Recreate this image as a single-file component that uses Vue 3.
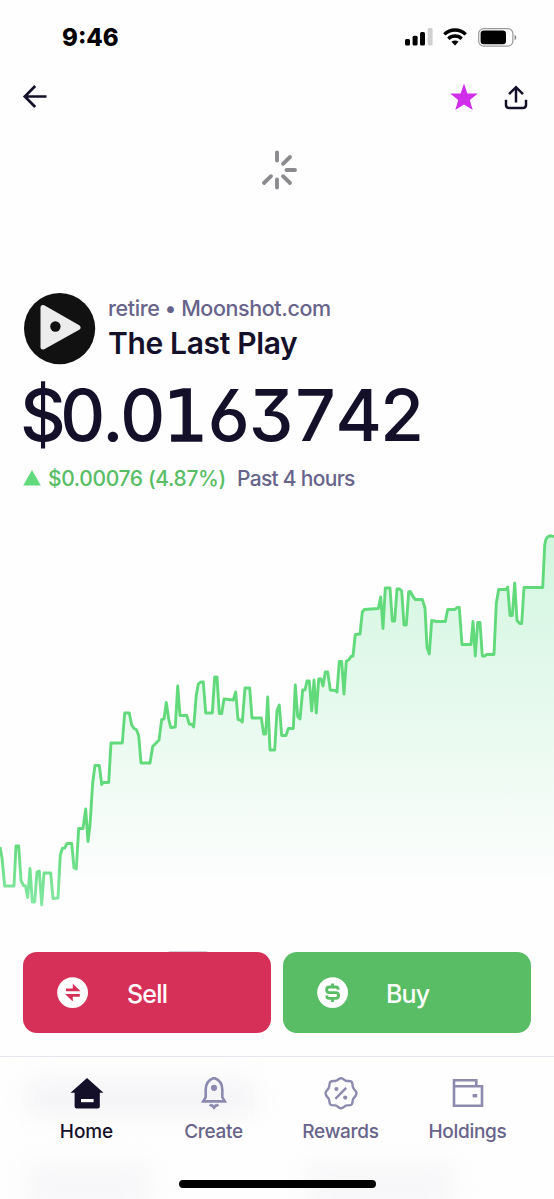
<template>

<div class="screen">

    <!-- Status bar -->

    <div class="status-bar">

        <span class="clock">{{ clock }}</span>

        <div class="status-icons">

            <svg width="28" height="18" viewBox="0 0 28 18">
                <rect x="0" y="11" width="5" height="6.5" rx="1.5" />
                <rect x="7.6" y="7.8" width="5" height="9.7" rx="1.5" />
                <rect x="15" y="4" width="5" height="13.5" rx="1.5" />
                <rect x="22.6" y="0" width="5" height="17.5" rx="1.5" fill="#d0d0d0" />
            </svg>

            <svg class="wifi" width="24" height="18" viewBox="0 0 24 18" fill="none" stroke="#000" stroke-width="3.3">
                <path d="M1.3 6.4C7.2 .5 16.8 .5 22.7 6.4" />
                <path d="M5.3 10.7C9 7.1 15 7.1 18.7 10.7" />
                <path d="M8.4 13.8C10.5 12 13.5 12 15.6 13.8L12 17.4Z" fill="#000" stroke="none" />
            </svg>

            <svg class="battery" width="39" height="19" viewBox="0 0 39 19">
                <rect x=".7" y=".7" width="34.2" height="17.4" rx="5" fill="none" stroke="#999" stroke-width="1.2" />
                <rect x="2.6" y="2.6" width="25.4" height="13.6" rx="3.2" />
                <path d="M36.6 6.8C38.9 7.8 38.9 11.2 36.6 12.2Z" fill="#888" />
            </svg>

        </div>

    </div>

    <!-- Top actions -->

    <div class="top-bar">

        <svg width="26" height="26" viewBox="0 0 26 26" fill="none" stroke="#15102a" stroke-width="2.7">
            <path d="M24.5 12.5H3M13.2 2L2.8 12.5L13.2 23" />
        </svg>

        <div class="top-actions">

            <svg width="28" height="28" viewBox="0 0 28 28" fill="#cf2eeb">
                <path d="M14 .6L17.4 10.5L27.9 10.6L19.8 17L22.7 27L14 21.4L5.3 27L8.2 17L.1 10.6L10.6 10.5Z" />
            </svg>

            <svg width="24" height="26" viewBox="0 0 24 26" fill="none" stroke="#15102a" stroke-width="2.5">
                <path d="M12 18.5V4M5 10.2L12 3.2L19 10.2M2 15.8V21Q2 23.9 4.9 23.9H19.1Q22 23.9 22 21V15.8" />
            </svg>

        </div>

    </div>

    <!-- Refresh spinner -->

    <div class="spinner">

        <svg width="44" height="42" viewBox="-22 -21 44 42" stroke="#8b8b8f" stroke-width="3.9" stroke-linecap="round">
            <path d="M0 -17.5V-9.5M0 9.5V17.5M9.5 0H18M6 -6.2L13 -13M6 6.2L13 13M-6 6.2L-13 13" />
        </svg>

    </div>

    <!-- Token -->

    <div class="token">

        <svg class="token-logo" width="72" height="72" viewBox="0 0 72 72">
            <circle cx="35.6" cy="35.6" r="35.6" fill="#111" />
            <path d="M19 14.5V54L54 34.5Z" fill="#ececec" stroke="#ececec" stroke-width="5" stroke-linejoin="round" />
            <circle cx="31.4" cy="33.5" r="5.2" fill="#111" />
        </svg>

        <div class="token-text">
            <span class="token-symbol">retire • Moonshot.com</span>
            <span class="token-name">The Last Play</span>
        </div>

    </div>

    <div class="price"><span class="currency">$</span>0.0<span class="slab">1</span>63742</div>

    <div class="change">

        <svg width="18" height="16" viewBox="0 0 18 16" fill="#62d97b">
            <path d="M9 0L17.8 15.5H.2Z" />
        </svg>

        <span class="change-value">$0.00076 (4.87%)</span>
        <span class="change-period">Past 4 hours</span>

    </div>

    <!-- Chart -->

    <svg class="chart" width="554" height="452" viewBox="0 500 554 452">
        <defs>
            <linearGradient id="area" gradientUnits="userSpaceOnUse" x1="0" y1="536" x2="0" y2="890">
                <stop offset="0" stop-color="#d2f6df" />
                <stop offset=".45" stop-color="#e5f9ed" />
                <stop offset="1" stop-color="#fefefe" />
            </linearGradient>
            <linearGradient id="line" gradientUnits="userSpaceOnUse" x1="0" y1="840" x2="0" y2="910">
                <stop offset="0" stop-color="#62da7b" />
                <stop offset="1" stop-color="#87e9a6" />
            </linearGradient>
        </defs>
        <path :d="areaPath" fill="url(#area)" />
        <path :d="linePath" fill="none" stroke="url(#line)" stroke-width="2.9" stroke-linejoin="round" />
    </svg>

    <!-- Trade buttons -->

    <div class="trade">

        <span class="sheet-handle"></span>

        <button class="btn btn-sell">
            <svg width="32" height="32" viewBox="0 0 32 32">
                <circle cx="15.6" cy="15.6" r="15.4" fill="#fff" />
                <path d="M9 11.6H15.8V6.8L23.6 14.3H9ZM22.8 19.8H15.8V24.6L8 17.1H22.8Z" fill="#d73058" />
            </svg>
            <span>Sell</span>
        </button>

        <button class="btn btn-buy">
            <svg width="32" height="32" viewBox="0 0 32 32">
                <circle cx="15.6" cy="15.6" r="15.4" fill="#fff" />
                <path d="M21.2 12.8V12.4Q21.2 10 18.8 10H12.4Q9.6 10 9.6 12.8Q9.6 15.6 12.4 15.6H18.8Q21.6 15.6 21.6 18.5Q21.6 21.3 18.8 21.3H12.2Q9.8 21.3 9.8 18.9V18.5M15.6 6.4V10M15.6 21.3V24.9" fill="none" stroke="#58bd64" stroke-width="2.8" />
            </svg>
            <span>Buy</span>
        </button>

    </div>

    <!-- Tab bar -->

    <nav class="tab-bar">

        <span class="haze haze-top"></span>
        <span class="haze haze-left"></span>
        <span class="haze haze-right"></span>

        <div class="tabs">

            <div class="tab active">
                <svg width="34" height="34" viewBox="0 0 34 34">
                    <path d="M17 1L33.5 15.7H29.8V29.5Q29.8 31.5 27.8 31.5H6.6Q4.6 31.5 4.6 29.5V15.7H.5Z" fill="#15102a" />
                    <rect x="11" y="22" width="12.6" height="3.2" fill="#fff" />
                </svg>
                <span>Home</span>
            </div>

            <div class="tab">
                <svg width="34" height="34" viewBox="0 0 34 34" fill="none" stroke="#8c8aae" stroke-width="2.6">
                    <path d="M8.7 20.2V12.5C8.7 6.5 12 2.6 17 .9C22 2.6 25.3 6.5 25.3 12.5V20.2L27.8 24.4H6.2Z" />
                    <circle cx="17" cy="10.8" r="3.1" fill="#8c8aae" stroke="none" />
                    <path d="M12.8 27.4Q14 29 15.2 28.6L17 30.7L18.8 28.6Q20 29 21.2 27.4" />
                </svg>
                <span>Create</span>
            </div>

            <div class="tab">
                <svg width="34" height="34" viewBox="0 0 34 34" fill="none" stroke="#8c8aae" stroke-width="2.4">
                    <path d="M17 1.2C20 1.2 20 4 22.8 4C25.2 4 28.5 3.2 28.5 7.5C28.5 10.2 28.8 11 30.4 12.6C33.2 15.2 33.2 17.5 30.5 20.2C28.9 21.8 28.5 22.5 28.5 25C28.5 28.9 25.4 28.3 22.8 28.4C20 28.5 20 31.3 17 31.3C14 31.3 14 28.5 11.2 28.4C8.6 28.3 5.5 28.9 5.5 25C5.5 22.5 5.1 21.8 3.5 20.2C.8 17.5 .8 15.2 3.6 12.6C5.2 11 5.5 10.2 5.5 7.5C5.5 3.2 8.8 4 11.2 4C14 4 14 1.2 17 1.2Z" stroke-linejoin="round" />
                    <path d="M11.3 21.8L22.2 10.8" />
                    <circle cx="12.4" cy="12" r="2.1" fill="#8c8aae" stroke="none" />
                    <circle cx="21.2" cy="20.6" r="2.1" fill="#8c8aae" stroke="none" />
                </svg>
                <span>Rewards</span>
            </div>

            <div class="tab">
                <svg width="34" height="34" viewBox="0 0 34 34" fill="none" stroke="#8c8aae" stroke-width="2.6">
                    <path d="M3 3.3H25.3V9.3M3 2V28.7H31V9.3H3" />
                    <rect x="21.6" y="17" width="4.6" height="3.4" fill="#8c8aae" stroke="none" />
                </svg>
                <span>Holdings</span>
            </div>

        </div>

        <span class="home-indicator"></span>

    </nav>

</div>

</template>

<script setup>

import { computed, ref } from 'vue'

const clock = ref('9:46')

/**
 * Price history
 */

const points = [
    [0, 847], [2, 858], [4.7, 886], [14, 886], [16, 846], [18.7, 846], [21, 880.5], [23.5, 885.5],
    [25.5, 886], [27.7, 897.5], [30, 868.5], [32.3, 902], [34.7, 902], [37, 872], [39.3, 871],
    [41.7, 905], [44, 873], [50.7, 873], [53, 898.5], [58, 898], [60.3, 855], [62.3, 848.5],
    [64.7, 848], [67, 843.5], [71.7, 843.5], [74, 868], [76.3, 869], [78.7, 828.5], [83, 828.5],
    [85.7, 809], [88, 841.5], [90, 825], [92.7, 783], [95, 765.5], [99.3, 765.5], [101.7, 784.5],
    [102.7, 782.5], [108.7, 782.5], [111, 743], [122.3, 743], [124.7, 713], [129.3, 713],
    [131.7, 725], [134, 728.5], [136.3, 729.5], [138.7, 735.5], [141, 763], [150, 763],
    [152.7, 746.5], [159, 740], [161.7, 719.5], [164, 719], [166.3, 702.5], [168.7, 719],
    [170.7, 727.5], [175.3, 727], [177.7, 686], [180, 715.5], [186.7, 715.5], [189.3, 724],
    [192, 724.5], [193.7, 727], [196.3, 695], [198.3, 684], [200.7, 682], [203.3, 682],
    [205.7, 713], [212.3, 713], [214.7, 677], [217, 677], [219.3, 713.5], [221.7, 713.5],
    [224, 699], [233.3, 700], [235.7, 692], [238, 719.5], [240.3, 720], [242.3, 722],
    [245, 688], [249.7, 688], [252, 718], [261.3, 718], [263.7, 734], [265.7, 734],
    [267.7, 697], [270, 750], [274.7, 750], [277, 710.5], [279.3, 705], [281.7, 735.5],
    [286, 735.5], [288.3, 728.5], [293.3, 728.5], [295.3, 685], [297.7, 716.5], [300, 719],
    [302.7, 690], [305, 690], [307, 681], [309.3, 681], [311.7, 711], [314, 680],
    [316.3, 713], [318.7, 679], [321, 679], [323, 686], [325.3, 672], [327.7, 672],
    [330.3, 690], [335.5, 690.5], [337, 692], [339.3, 661.5], [341.7, 661.5], [344, 694],
    [346.3, 661], [348.7, 660], [351, 656.5], [353, 656], [355.3, 634.5], [360, 634],
    [362.3, 612], [364.3, 609.5], [378.3, 608.5], [380.7, 597], [383, 628.5], [385.3, 588],
    [390, 588], [392.3, 621], [394.7, 621], [397, 589], [399.5, 589], [401.7, 591],
    [404, 625], [406.3, 625], [408.7, 592], [410.3, 591.5], [413, 596.5], [415.3, 599.5],
    [422.3, 599.5], [425, 608], [427, 647.5], [429.3, 654], [431.7, 620.5], [436.7, 621.5],
    [445.3, 621.5], [447.7, 609.5], [455, 609.5], [457, 607.5], [459.3, 607.5], [462, 644.5],
    [471, 644.5], [473, 621.5], [475.3, 656], [477.7, 622.5], [480, 622.5], [482.3, 656],
    [484.7, 656], [486.7, 654.5], [494, 654.5], [496.3, 603], [498.7, 589.5], [506, 589.5],
    [507.7, 587], [510, 615.5], [512.3, 615.5], [514.7, 583], [517, 620.5], [519.7, 623.5],
    [521.7, 623.5], [524, 587.5], [542.7, 587.5], [544.7, 545], [545.7, 540], [547.5, 537],
    [550, 535.8], [554, 536.5]
]

const linePath = computed(() => 'M' + points.map((p) => p.join(' ')).join('L'))

const areaPath = computed(() => linePath.value + 'V910H0Z')

</script>

<style>

body {
    margin: 0;
    background: #fff;
}

</style>

<style scoped>

.screen {
    display: flex;
    flex-direction: column;
    width: 554px;
    height: 1199px;
    overflow: hidden;
    background: #fefefe;
    color: #15102a;
    font-family: Inter, "Liberation Sans", sans-serif;
    font-weight: 500;
    white-space: nowrap;
}

.screen svg {
    display: block;
    flex: none;
}

.status-bar {
    display: flex;
    justify-content: space-between;
    align-items: center;
    height: 74px;
    padding: 0 37px 0 62px;
    box-sizing: border-box;
}

.clock {
    color: #000;
    font-size: 24px;
    font-weight: 800;
}

.status-icons {
    display: flex;
    align-items: center;
}

.wifi {
    margin-left: 10px;
}

.battery {
    margin-left: 11px;
}

.top-bar {
    display: flex;
    justify-content: space-between;
    align-items: center;
    height: 46px;
    padding: 0 26px 0 22px;
}

.top-actions {
    display: flex;
    align-items: center;
    gap: 26px;
}

.spinner {
    display: flex;
    justify-content: center;
    height: 144px;
    padding-top: 29px;
}

.token {
    display: flex;
    align-items: center;
    gap: 12px;
    height: 72px;
    padding-left: 24px;
}

.token-text {
    display: flex;
    flex-direction: column;
    margin-top: -4px;
}

.token-symbol {
    color: #67638a;
    font-size: 21.5px;
    line-height: 32px;
    letter-spacing: -0.4px;
}

.token-name {
    font-size: 30px;
    font-weight: 600;
    line-height: 38px;
    letter-spacing: -0.35px;
}

.price {
    height: 99px;
    padding-left: 20px;
    font-size: 71px;
    line-height: 101px;
    font-weight: 550;
    letter-spacing: -2.6px;
    font-feature-settings: "tnum", "cv03", "cv09";
}

.currency {
    margin-right: -3.5px;
}

.slab {
    font-family: "DejaVu Sans", sans-serif;
    font-weight: 400;
    -webkit-text-stroke: 1.4px #15102a;
}

.change {
    display: flex;
    align-items: center;
    height: 37px;
    padding-left: 24px;
    padding-bottom: 9px;
    box-sizing: border-box;
    font-size: 21px;
}

.change svg {
    margin-left: -1px;
}

.change-value {
    margin-left: 7px;
    color: #58bd64;
    letter-spacing: -0.35px;
}

.change-period {
    margin-left: 11px;
    color: #67638a;
    letter-spacing: -0.7px;
}

.chart {
    margin-top: -1px;
}

.trade {
    position: relative;
    display: flex;
    gap: 12px;
    padding: 0 23px;
}

.sheet-handle {
    position: absolute;
    top: -1px;
    left: 168px;
    width: 40px;
    height: 4px;
    border-radius: 2px;
    background: #d2d2d8;
}

.btn {
    position: relative;
    display: flex;
    flex: 1;
    align-items: center;
    height: 81px;
    padding: 0 0 0 34px;
    border: none;
    border-radius: 14px;
    color: #fff;
    font-family: inherit;
    font-size: 25px;
    font-weight: 500;
    letter-spacing: -0.8px;
}

.btn span {
    margin-left: 37px;
    padding-top: 2px;
}

.btn-sell {
    background: #d73058;
}

.btn-sell span {
    margin-left: 38px;
}

.btn-buy {
    background: #58bd64;
}

.tab-bar {
    position: relative;
    display: flex;
    flex: 1;
    flex-direction: column;
    align-items: center;
    margin-top: 23px;
    border-top: 1px solid #e6e6f0;
    overflow: hidden;
}

.tabs {
    position: relative;
    display: flex;
    width: 508px;
    padding-top: 20px;
}

.tab {
    display: flex;
    flex: 1;
    flex-direction: column;
    align-items: center;
    color: #67638a;
    font-size: 19px;
    line-height: 24px;
    letter-spacing: -0.3px;
}

.tab span {
    margin-top: 9px;
}

.tab.active {
    color: #15102a;
    letter-spacing: -0.1px;
}

.haze {
    position: absolute;
    background: #f3f3f6;
    filter: blur(12px);
}

.haze-top {
    top: 25px;
    left: 28px;
    width: 225px;
    height: 32px;
}

.haze-left {
    top: 105px;
    left: 26px;
    width: 125px;
    height: 50px;
    opacity: 0.6;
}

.haze-right {
    top: 105px;
    left: 305px;
    width: 150px;
    height: 50px;
    opacity: 0.6;
}

.home-indicator {
    position: relative;
    width: 197px;
    height: 8px;
    margin-top: 36px;
    border-radius: 4px;
    background: #000;
}

</style>
